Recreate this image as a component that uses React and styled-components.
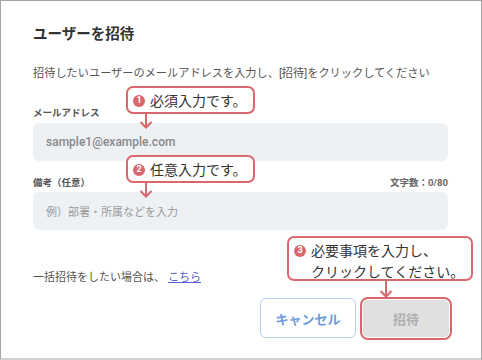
import React from "react";
import styled, { createGlobalStyle } from "styled-components";

const RED = "#d9676b";

const GlobalStyle = createGlobalStyle`
  html, body {
    margin: 0;
    padding: 0;
    background: #ffffff;
  }
  body {
    font-family: "Roboto", "Noto Sans CJK JP", sans-serif;
    color: #333;
  }
`;

const Frame = styled.div`
  position: relative;
  box-sizing: border-box;
  width: 482px;
  height: 360px;
  border: 1px solid #a4a4a4;
  border-bottom: 2px solid #cfcfcf;
  background: #fff;
  overflow: hidden;
`;

const Dialog = styled.div`
  display: flex;
  flex-direction: column;
  padding: 23px 33px 0 32px;
`;

const Title = styled.h1`
  margin: 0;
  font-size: 14.5px;
  line-height: 22px;
  font-weight: 700;
  color: #333;
  letter-spacing: 0;
`;

const Description = styled.p`
  margin: 20px 0 0;
  font-size: 11.2px;
  line-height: 16px;
  color: #555;
`;

const LabelRow = styled.div`
  display: flex;
  justify-content: space-between;
  align-items: center;
  margin-top: ${(p) => p.$mt}px;
  height: 14px;
`;

const Label = styled.label`
  font-size: 9.5px;
  font-weight: 700;
  color: #555;
`;

const Counter = styled.span`
  font-size: 9.5px;
  font-weight: 700;
  color: #666;
`;

const Field = styled.div`
  display: flex;
  align-items: center;
  box-sizing: border-box;
  height: 38px;
  margin-top: ${(p) => p.$mt}px;
  padding: 0 13px;
  border-radius: 6px;
  background: #eef1f4;
  font-size: ${(p) => (p.$placeholder ? "11px" : "12px")};
  font-weight: ${(p) => (p.$placeholder ? 400 : 500)};
  color: ${(p) => (p.$placeholder ? "#9a9a9a" : "#888")};
`;

const Note = styled.p`
  margin: 40px 0 0;
  font-size: 11px;
  line-height: 16px;
  color: #555;

  a {
    margin-left: 3px;
    color: #5560d0;
    text-decoration: underline;
  }
`;

const Actions = styled.div`
  display: flex;
  justify-content: flex-end;
  align-items: center;
  gap: 7px;
  margin: 12px -1px 0 0;
`;

const CancelButton = styled.button`
  box-sizing: border-box;
  width: 96px;
  height: 40px;
  border: 1px solid #b3cdf0;
  border-radius: 6px;
  background: #fff;
  color: #6e9be0;
  font-family: inherit;
  font-size: 13px;
  font-weight: 700;
`;

const InviteButton = styled.button`
  box-sizing: border-box;
  width: 86px;
  height: 37px;
  border: none;
  border-radius: 5px;
  background: #e0e0e0;
  color: #b0b0b0;
  font-family: inherit;
  font-size: 13px;
  font-weight: 700;
  outline: 2px solid ${RED};
  outline-offset: 1px;
`;

/* annotation callouts laid over the dialog */
const Callout = styled.div`
  position: absolute;
  box-sizing: border-box;
  left: ${(p) => p.$left}px;
  top: ${(p) => p.$top}px;
  width: ${(p) => p.$width}px;
  height: ${(p) => p.$height}px;
  padding: 2px 0 0 5px;
  border: 2px solid ${RED};
  border-radius: 7px;
  background: #fff;
  font-family: "Noto Sans CJK JP", sans-serif;
  font-size: 14px;
  line-height: 21px;
  color: #333;
`;

const CalloutLine = styled.div`
  display: flex;
  align-items: center;
  gap: 5px;
  padding-left: ${(p) => (p.$indent ? 17 : 0)}px;
`;

const Badge = styled.span`
  display: inline-flex;
  align-items: center;
  justify-content: center;
  flex: none;
  width: 12px;
  height: 12px;
  border-radius: 50%;
  background: ${RED};
  color: #fff;
  font-family: "Roboto", sans-serif;
  font-size: 9px;
  font-weight: 700;
  line-height: 1;
`;

const Arrow = styled.svg`
  position: absolute;
  left: ${(p) => p.$x - 7}px;
  top: ${(p) => p.$top}px;
`;

function Pointer({ x, top, length }) {
  return (
    <Arrow $x={x} $top={top} width="14" height={length} viewBox={`0 0 14 ${length}`}>
      <line x1="7" y1="0" x2="7" y2={length - 1} stroke={RED} strokeWidth="2" />
      <polyline
        points={`1.5,${length - 7} 7,${length - 1.5} 12.5,${length - 7}`}
        fill="none"
        stroke={RED}
        strokeWidth="2"
      />
    </Arrow>
  );
}

export default function App() {
  return (
    <>
      <GlobalStyle />
      <Frame>
        <Dialog>
          <Title>ユーザーを招待</Title>
          <Description>
            招待したいユーザーのメールアドレスを入力し、[招待]をクリックしてください
          </Description>

          <LabelRow $mt={23}>
            <Label>メールアドレス</Label>
          </LabelRow>
          <Field $mt={4}>sample1@example.com</Field>

          <LabelRow $mt={14}>
            <Label>備考（任意）</Label>
            <Counter>文字数：0/80</Counter>
          </LabelRow>
          <Field $mt={3} $placeholder>
            例）部署・所属などを入力
          </Field>

          <Note>
            一括招待をしたい場合は、<a href="#">こちら</a>
          </Note>

          <Actions>
            <CancelButton>キャンセル</CancelButton>
            <InviteButton disabled>招待</InviteButton>
          </Actions>
        </Dialog>

        <Callout $left={125} $top={85} $width={129} $height={28}>
          <CalloutLine>
            <Badge>1</Badge>必須入力です。
          </CalloutLine>
        </Callout>
        <Pointer x={145} top={112} length={16} />

        <Callout $left={125} $top={154} $width={129} $height={28}>
          <CalloutLine>
            <Badge>2</Badge>任意入力です。
          </CalloutLine>
        </Callout>
        <Pointer x={145} top={181} length={16} />

        <Callout $left={286} $top={235} $width={186} $height={45}>
          <CalloutLine>
            <Badge>3</Badge>必要事項を入力し、
          </CalloutLine>
          <CalloutLine $indent>クリックしてください。</CalloutLine>
        </Callout>
        <Pointer x={385} top={279} length={18} />
      </Frame>
    </>
  );
}
